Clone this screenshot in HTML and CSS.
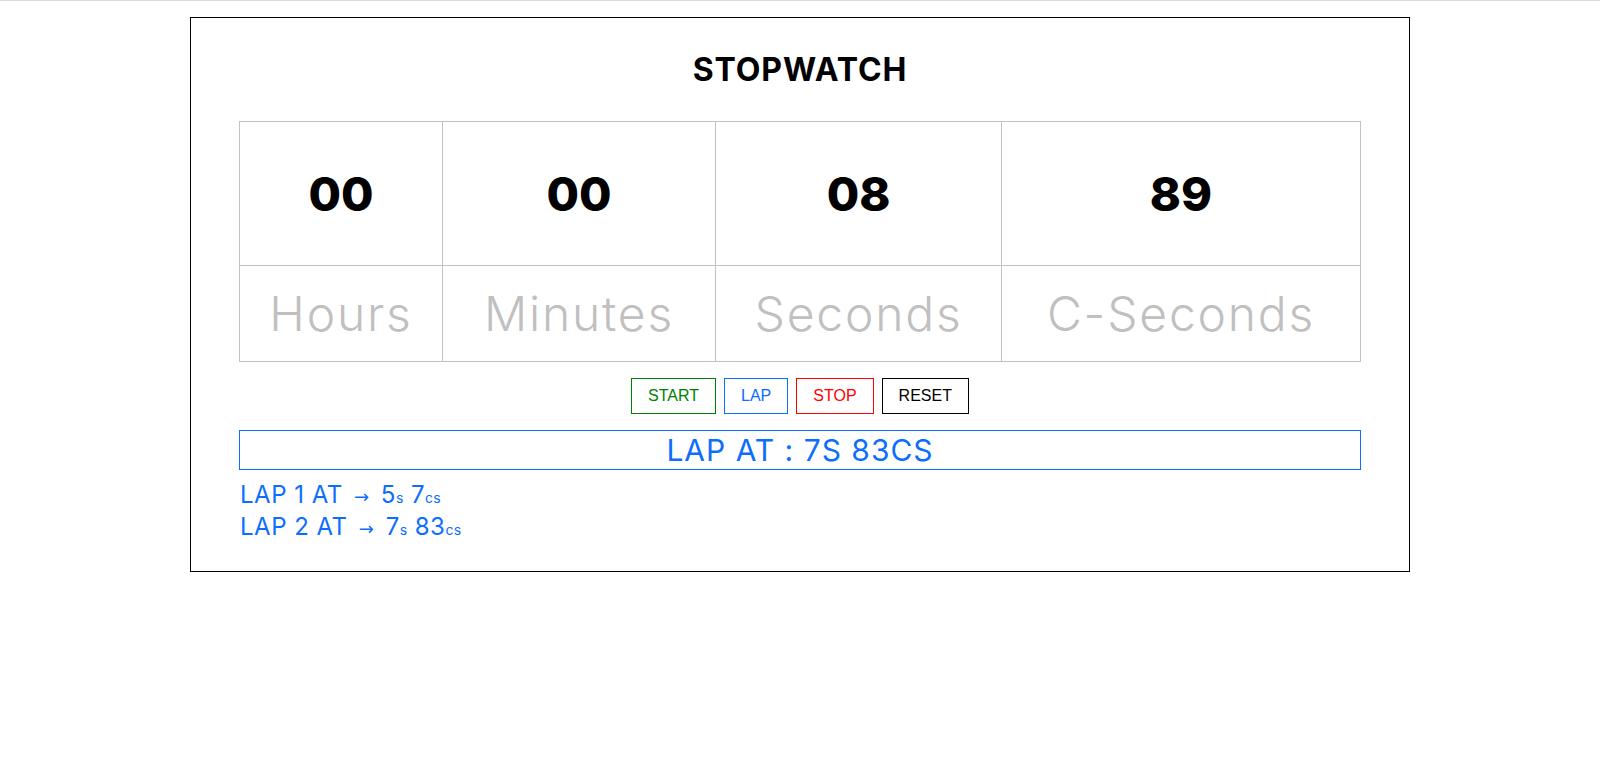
FILE: index.html
```html
<!DOCTYPE html>
<html lang="en">
<head>
<meta charset="utf-8">
<title>Stopwatch</title>
<link rel="stylesheet" href="styles.css">
</head>
<body>
<div class="topline"></div>
<main class="card">
  <h1 class="title">STOPWATCH</h1>
  <table class="clock">
    <colgroup>
      <col class="c1"><col class="c2"><col class="c3"><col class="c4">
    </colgroup>
    <tr class="nums">
      <td>00</td><td>00</td><td>08</td><td>89</td>
    </tr>
    <tr class="labels">
      <td>Hours</td><td>Minutes</td><td>Seconds</td><td>C-Seconds</td>
    </tr>
  </table>
  <div class="controls">
    <button class="btn start">START</button>
    <button class="btn lap">LAP</button>
    <button class="btn stop">STOP</button>
    <button class="btn reset">RESET</button>
  </div>
  <div class="lapbox">LAP AT : 7S 83CS</div>
  <ul class="laps">
    <li>LAP 1 AT <span class="arrow">→</span> 5<small>s</small> 7<small>cs</small></li>
    <li>LAP 2 AT <span class="arrow">→</span> 7<small>s</small> 83<small>cs</small></li>
  </ul>
</main>
</body>
</html>
```

FILE: styles.css
```css
* { box-sizing: border-box; }
html, body { margin: 0; padding: 0; background: #fff; }
body { font-family: Inter, "DejaVu Sans", sans-serif; color: #000; }
.topline { height: 1px; background: #dadada; }
.card {
  width: 1220px;
  margin: 16px auto 0;
  border: 1px solid #000;
  padding: 0 48px 27px;
}
.title {
  margin: 0;
  padding-top: 34px;
  height: 103px;
  font-size: 32px;
  font-weight: 700;
  text-align: center;
  line-height: 36px;
  letter-spacing: 0.9px;
}
.clock {
  width: 100%;
  border-collapse: collapse;
  table-layout: fixed;
}
.clock td {
  border: 1px solid #c2c2c2;
  text-align: center;
  padding: 0;
}
.c1 { width: 203px; }
.c2 { width: 273px; }
.c3 { width: 286px; }
.c4 { width: auto; }
.nums td {
  height: 144px;
  font-size: 47px;
  font-weight: 800;
}
.labels td {
  height: 96px;
  font-size: 48px;
  font-weight: 300;
  letter-spacing: 1.8px;
  color: #c0c0c0;
}
.controls {
  display: flex;
  justify-content: center;
  gap: 8px;
  margin-top: 16px;
}
.btn {
  font-family: "Liberation Sans", Arial, sans-serif;
  font-size: 16px;
  background: #fff;
  padding: 8px 16px;
  border: 1px solid;
  line-height: 18px;
}
.start { color: #008000; border-color: #008000; }
.lap { color: #0d6efd; border-color: #0d6efd; }
.stop { color: #ff0000; border-color: #ff0000; }
.reset { color: #000; border-color: #000; }
.lapbox {
  margin-top: 16px;
  border: 1px solid #0d6efd;
  color: #0d6efd;
  height: 40px;
  font-size: 30px;
  line-height: 38px;
  text-align: center;
  letter-spacing: 1px;
}
.laps {
  list-style: none;
  margin: 10px 0 0;
  padding: 0 0 0 1px;
  color: #0d6efd;
  font-size: 24px;
  line-height: 29px;
  letter-spacing: 0.5px;
}
.laps small { font-size: 14px; letter-spacing: 0.3px; }
.arrow { font-size: 18px; font-family: "DejaVu Sans", sans-serif; margin: 0 4px; }
```
